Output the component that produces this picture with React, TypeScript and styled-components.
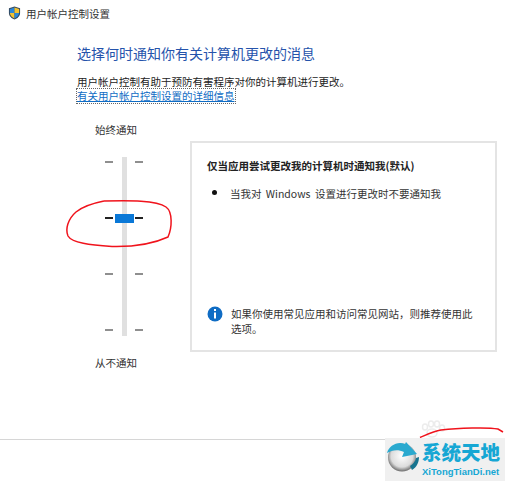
import React from 'react';
import styled, { createGlobalStyle } from 'styled-components';

const GlobalStyle = createGlobalStyle`
  html, body {
    margin: 0;
    padding: 0;
    background: #fff;
  }
  body {
    font-family: "Noto Sans CJK SC", "Noto Sans", sans-serif;
    color: #222;
  }
`;

const TICKS = [false, true, false, false];

const App: React.FC = () => (
  <Page>
    <GlobalStyle />
    <TitleBar>
      <ShieldIcon />
      <TitleText>用户帐户控制设置</TitleText>
    </TitleBar>
    <Content>
      <Heading>选择何时通知你有关计算机更改的消息</Heading>
      <Description>用户帐户控制有助于预防有害程序对你的计算机进行更改。</Description>
      <HelpLink>有关用户帐户控制设置的详细信息</HelpLink>
      <Settings>
        <SliderColumn>
          <SliderLabel>始终通知</SliderLabel>
          <Slider>
            <Track />
            {TICKS.map((active, i) => (
              <TickRow key={i}>
                <Tick $active={active} />
                {active ? <Thumb /> : <ThumbGap />}
                <Tick $active={active} />
              </TickRow>
            ))}
          </Slider>
          <SliderLabel>从不通知</SliderLabel>
        </SliderColumn>
        <Panel>
          <div>
            <PanelTitle>仅当应用尝试更改我的计算机时通知我(默认)</PanelTitle>
            <BulletRow>
              <Bullet />
              <span>当我对 Windows 设置进行更改时不要通知我</span>
            </BulletRow>
          </div>
          <InfoRow>
            <InfoIcon />
            <InfoText>如果你使用常见应用和访问常见网站，则推荐使用此选项。</InfoText>
          </InfoRow>
        </Panel>
      </Settings>
    </Content>
    <BottomRule />
    <RedMarks />
    <Watermark>
      <GlobeLogo />
      <WatermarkText>
        <WatermarkName>系统天地</WatermarkName>
        <WatermarkUrl>XiTongTianDi.net</WatermarkUrl>
      </WatermarkText>
    </Watermark>
  </Page>
);

export default App;

const ShieldIcon = () => (
  <svg width="13" height="14" viewBox="0 0 14 15">
    <path d="M7 0.5 L13 2.5 V7.5 C13 11 10 13.5 7 14.5 C4 13.5 1 11 1 7.5 V2.5 Z" fill="#33475c" />
    <path d="M7 1.7 V7.5 H2 V3.3 Z" fill="#2a86d8" />
    <path d="M7 1.7 L12 3.3 V7.5 H7 Z" fill="#f3c22f" />
    <path d="M2 7.5 H7 V13.3 C4.6 12.4 2.2 10.4 2 7.5 Z" fill="#f3c22f" />
    <path d="M7 7.5 H12 C11.8 10.4 9.4 12.4 7 13.3 Z" fill="#2a86d8" />
  </svg>
);

const InfoIcon = () => (
  <InfoGlyph width="16" height="16" viewBox="0 0 16 16">
    <circle cx="8" cy="8" r="7.5" fill="#0f6cc4" />
    <rect x="7" y="3" width="2" height="2" fill="#fff" />
    <rect x="7" y="6.5" width="2" height="6" fill="#fff" />
  </InfoGlyph>
);

// 빨간 펜 자국 + 워터마크 뒤 옅은 발바닥
const RedMarks = () => (
  <InkLayer width="505" height="481" viewBox="0 0 505 481">
    <g fill="none" stroke="#ececec" strokeWidth="1.5">
      <ellipse cx="432" cy="433" rx="5" ry="4" />
      <ellipse cx="425" cy="427" rx="2.5" ry="3" />
      <ellipse cx="431" cy="424" rx="2.5" ry="3" />
      <ellipse cx="437" cy="424" rx="2.5" ry="3" />
      <ellipse cx="442" cy="428" rx="2.5" ry="3" />
    </g>
    <path
      d="M104 201 C94 203 82 207 76 212 C68 219 65 229 68 236 C72 243 90 245 112 246.5 C135 247 155 243 168 237 C172 228 173 212 166 207 C156 200 130 200.5 104 201"
      fill="none"
      stroke="#f0131c"
      strokeWidth="1.5"
    />
    <path
      d="M420 437.5 C428 434 434 431 441 430 C458 428 488 427 498 429 L503 432"
      fill="none"
      stroke="#f0131c"
      strokeWidth="1.5"
    />
  </InkLayer>
);

const GlobeLogo = () => (
  <svg width="34" height="30" viewBox="0 0 34 30">
    <defs>
      <radialGradient id="ball" cx="0.5" cy="0.45" r="0.6">
        <stop offset="0" stopColor="#ffffff" />
        <stop offset="0.65" stopColor="#dcdcdc" />
        <stop offset="1" stopColor="#4a4a4a" />
      </radialGradient>
    </defs>
    <circle cx="16" cy="15.5" r="14" fill="url(#ball)" />
    <path d="M1 11 C3 4 11 -1 19 2 L20 0 L31 12 L16 15 L18 10 C12 7 6 8 1 11 Z" fill="#2aa9cf" />
    <path d="M24 24 C27 22 29 20 30 16 L33 15 C33 20 31 25 26 28 Z" fill="#17748f" />
  </svg>
);

const Page = styled.div`
  position: relative;
  width: 505px;
  height: 481px;
  overflow: hidden;
  background: #fff;
`;

const TitleBar = styled.div`
  display: flex;
  align-items: center;
  gap: 5px;
  height: 26px;
  padding-left: 8px;
`;

const TitleText = styled.span`
  font-size: 10.5px;
  color: #333;
`;

const Content = styled.div`
  display: flex;
  flex-direction: column;
  padding: 16px 8px 0 77px;
`;

const Heading = styled.div`
  font-size: 14px;
  line-height: 22px;
  color: #2553ab;
`;

const Description = styled.div`
  margin-top: 10px;
  font-size: 10.5px;
  line-height: 15px;
  color: #222;
`;

const HelpLink = styled.a`
  align-self: flex-start;
  font-size: 10.5px;
  line-height: 14px;
  color: #0f6cc4;
  text-decoration: underline;
  outline: 1px dotted #666;
`;

const Settings = styled.div`
  display: flex;
  margin-top: 19px;
  margin-left: 18px;
`;

const SliderColumn = styled.div`
  display: flex;
  flex-direction: column;
  width: 95px;
`;

const SliderLabel = styled.div`
  font-size: 10.5px;
  line-height: 16px;
  color: #333;
`;

const Slider = styled.div`
  position: relative;
  display: flex;
  flex-direction: column;
  justify-content: space-between;
  box-sizing: border-box;
  width: 38px;
  height: 179px;
  margin: 19px 0 19px 10px;
  padding-bottom: 1px;
`;

const Track = styled.div`
  position: absolute;
  left: 17px;
  top: 0;
  bottom: 0;
  width: 5px;
  background: #e0e0e0;
`;

const TickRow = styled.div`
  position: relative;
  display: flex;
  align-items: center;
  justify-content: space-between;
  height: 10px;
`;

const Tick = styled.span<{ $active: boolean }>`
  width: 8px;
  height: 2px;
  background: ${(p) => (p.$active ? '#222' : '#8f8f8f')};
`;

const Thumb = styled.span`
  width: 19px;
  height: 9px;
  background: #0a78d7;
`;

const ThumbGap = styled.span`
  width: 19px;
`;

const Panel = styled.div`
  display: flex;
  flex-direction: column;
  justify-content: space-between;
  box-sizing: border-box;
  width: 307px;
  height: 211px;
  margin-top: 19px;
  padding: 15px 19px 14px 15px;
  border: 2px solid #e4e4e4;
  background: #fff;
  font-size: 10.5px;
  color: #333;
`;

const PanelTitle = styled.div`
  line-height: 16px;
  font-weight: 700;
  color: #222;
`;

const BulletRow = styled.div`
  display: flex;
  align-items: flex-start;
  margin-top: 12px;
  line-height: 16px;
  word-spacing: 2px;
`;

const Bullet = styled.span`
  flex: none;
  width: 5px;
  height: 5px;
  margin: 3.5px 13.5px 0 4.5px;
  border-radius: 50%;
  background: #111;
`;

const InfoRow = styled.div`
  display: flex;
  gap: 8px;
`;

const InfoGlyph = styled.svg`
  flex: none;
`;

const InfoText = styled.div`
  flex: 1;
  line-height: 15px;
`;

const BottomRule = styled.div`
  position: absolute;
  left: 0;
  top: 439px;
  width: 385px;
  height: 1px;
  background: #d6d6d6;
`;

const InkLayer = styled.svg`
  position: absolute;
  left: 0;
  top: 0;
  pointer-events: none;
`;

const Watermark = styled.div`
  position: absolute;
  right: 0;
  top: 438px;
  display: flex;
  align-items: flex-start;
  gap: 2px;
  box-sizing: border-box;
  width: 120px;
  height: 43px;
  padding: 4px 0 0 1px;
  background: #f0f0f0;
`;

const WatermarkText = styled.div`
  display: flex;
  flex-direction: column;
  gap: 4px;
`;

const WatermarkName = styled.div`
  font-size: 19.5px;
  line-height: 20px;
  font-weight: 900;
  color: #16a7d4;
`;

const WatermarkUrl = styled.div`
  font-family: "Liberation Sans", sans-serif;
  font-size: 9.5px;
  line-height: 12px;
  font-weight: 700;
  color: #16a7d4;
`;
